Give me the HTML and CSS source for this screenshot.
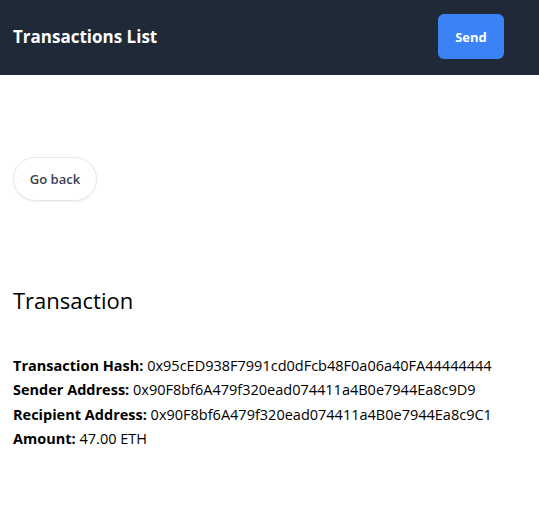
FILE: index.html
```html
<!DOCTYPE html>
<html>
<head>
<meta charset="utf-8">
<link rel="stylesheet" href="styles.css">
</head>
<body>
<header class="topbar">
  <h1 class="title">Transactions List</h1>
  <button class="send">Send</button>
</header>
<main class="content">
  <button class="back">Go back</button>
  <h2 class="heading">Transaction</h2>
  <div class="details">
    <div><b>Transaction Hash:</b> 0x95cED938F7991cd0dFcb48F0a06a40FA44444444</div>
    <div><b>Sender Address:</b> 0x90F8bf6A479f320ead074411a4B0e7944Ea8c9D9</div>
    <div><b>Recipient Address:</b> 0x90F8bf6A479f320ead074411a4B0e7944Ea8c9C1</div>
    <div><b>Amount:</b> 47.00 ETH</div>
  </div>
</main>
</body>
</html>
```
FILE: styles.css
```css
* { box-sizing: border-box; }
body {
  margin: 0;
  font-family: "Open Sans", "Noto Sans", sans-serif;
  color: #000;
  background: #fff;
}
.topbar {
  height: 75px;
  background: #1f2937;
  display: flex;
  align-items: flex-start;
  justify-content: space-between;
  padding: 14px 35px 0 13px;
}
.title {
  margin: 11px 0 0;
  color: #fff;
  font-size: 17px;
  line-height: 24px;
  font-weight: 700;
}
.send {
  width: 66px;
  height: 45px;
  border: none;
  border-radius: 6px;
  background: #3b82f6;
  color: #fff;
  font-family: inherit;
  font-size: 13px;
  font-weight: 700;
}
.content {
  padding: 82px 13px 0;
  display: flex;
  flex-direction: column;
  align-items: flex-start;
}
.back {
  width: 84px;
  height: 44px;
  border: 1px solid #e5e7eb;
  border-radius: 22px;
  background: #fff;
  box-shadow: 0 1px 2px rgba(0,0,0,0.06);
  color: #374151;
  font-family: inherit;
  font-size: 13px;
  font-weight: 600;
}
.heading {
  margin: 84px 0 0;
  font-size: 22px;
  font-weight: 400;
  line-height: 30px;
}
.details {
  margin-top: 39px;
  font-size: 14.5px;
  line-height: 24.3px;
}
.details b { font-weight: 700; }
```
